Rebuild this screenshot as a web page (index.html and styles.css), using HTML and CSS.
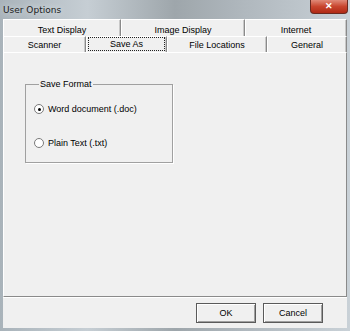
FILE: index.html
```html
<!DOCTYPE html>
<html lang="en">
  <head>
    <meta charset="UTF-8" />
    <title>User Options</title>
    <link rel="stylesheet" href="styles.css">
  </head>
  <body>
    <div class="window">
      <div class="titlebar">
        <span class="title">User Options</span>
        <span class="close-btn">&#x2715;</span>
      </div>

      <div class="window-body">
        <div class="tab-row back-row">
          <div class="tab">Text Display</div>
          <div class="tab">Image Display</div>
          <div class="tab">Internet</div>
        </div>
        <div class="tab-row front-row">
          <div class="tab">Scanner</div>
          <div class="tab active"><span class="focus">Save As</span></div>
          <div class="tab">File Locations</div>
          <div class="tab">General</div>
        </div>

        <div class="panel">
          <fieldset class="group">
            <legend>Save Format</legend>
            <label class="radio">
              <span class="radio-dot checked"></span>
              Word document (.doc)
            </label>
            <label class="radio">
              <span class="radio-dot"></span>
              Plain Text (.txt)
            </label>
          </fieldset>
        </div>

        <div class="footer">
          <button class="btn">OK</button>
          <button class="btn">Cancel</button>
        </div>
      </div>
    </div>
  </body>
</html>
```

FILE: styles.css
```css
body {
  margin: 0;
  font-family: "Liberation Sans", Arial, sans-serif;
  font-size: 9px;
  color: #000;
}
.window {
  width: 350px;
  height: 331px;
  display: flex;
  flex-direction: column;
  background: linear-gradient(90deg, #a9b3ba 0%, #c6ced4 25%, #9ea6ab 50%, #b0b8be 70%, #c9d1d7 100%);
  box-sizing: border-box;
}
.titlebar {
  height: 19px;
  display: flex;
  align-items: flex-start;
  justify-content: space-between;
  flex-shrink: 0;
}
.title {
  font-family: "DejaVu Sans", sans-serif;
  font-size: 9px;
  color: #1c1c1c;
  padding: 5px 0 0 3px;
  text-shadow: 0 0 6px #e8eef2;
}
.close-btn {
  width: 36px;
  height: 13px;
  margin-right: 2px;
  background: linear-gradient(#e08a78, #c8452e 50%, #b02a15);
  border: 1px solid #6a2a20;
  border-top: none;
  border-radius: 0 0 4px 4px;
  color: #fff;
  font-size: 9px;
  font-weight: bold;
  text-align: center;
  line-height: 12px;
}
.window-body {
  flex: 1;
  margin: 0 3px 3px;
  background: #f0f0f0;
  display: flex;
  flex-direction: column;
}
.tab-row {
  display: grid;
  box-sizing: border-box;
}
.back-row {
  grid-template-columns: 118px 124px 1fr;
  height: 17px;
}
.back-row .tab {
  padding-top: 3px;
}
.front-row {
  grid-template-columns: 83px 81px 100px 1fr;
  height: 16px;
}
.tab {
  display: flex;
  align-items: center;
  justify-content: center;
  border-top: 1px solid #fff;
  border-left: 1px solid #fff;
  border-right: 1px solid #8a8a8a;
  box-shadow: inset -1px 0 0 #c8c8c8;
}
.focus {
  align-self: stretch;
  flex: 1;
  margin: 0 1px 1px;
  border: 1px dotted #222;
  display: flex;
  align-items: center;
  justify-content: center;
}
.panel {
  flex: 1;
  border-top: 1px solid #fff;
  border-left: 1px solid #fff;
  border-right: 1px solid #8a8a8a;
  border-bottom: 1px solid #8a8a8a;
  padding: 26px 0 0 21px;
}
.group {
  width: 148px;
  height: 84px;
  margin: 0;
  padding: 15px 0 0 8px;
  border: 1px solid #a0a0a0;
  box-shadow: 1px 1px 0 #fff;
  box-sizing: border-box;
  display: flex;
  flex-direction: column;
  gap: 24px;
}
.group legend {
  padding: 0 1px;
  margin-left: 5px;
}
.radio {
  display: flex;
  align-items: center;
  gap: 4px;
  height: 10px;
}
.radio-dot {
  width: 8px;
  height: 8px;
  border-radius: 50%;
  border: 1px solid #7a7a7a;
  background: #fff;
  display: flex;
  align-items: center;
  justify-content: center;
}
.radio-dot.checked::after {
  content: "";
  width: 3px;
  height: 3px;
  border-radius: 50%;
  background: #000;
}
.footer {
  height: 30px;
  display: flex;
  justify-content: flex-end;
  align-items: center;
  gap: 7px;
  padding-right: 24px;
  border-top: 1px solid #fff;
}
.btn {
  width: 60px;
  height: 20px;
  font-family: "Liberation Sans", Arial, sans-serif;
  font-size: 9px;
  background: #f0f0f0;
  border: 1px solid #5a5a5a;
  box-shadow: inset 1px 1px 0 #fff, inset -1px -1px 0 #a0a0a0;
  padding: 0;
}
```
